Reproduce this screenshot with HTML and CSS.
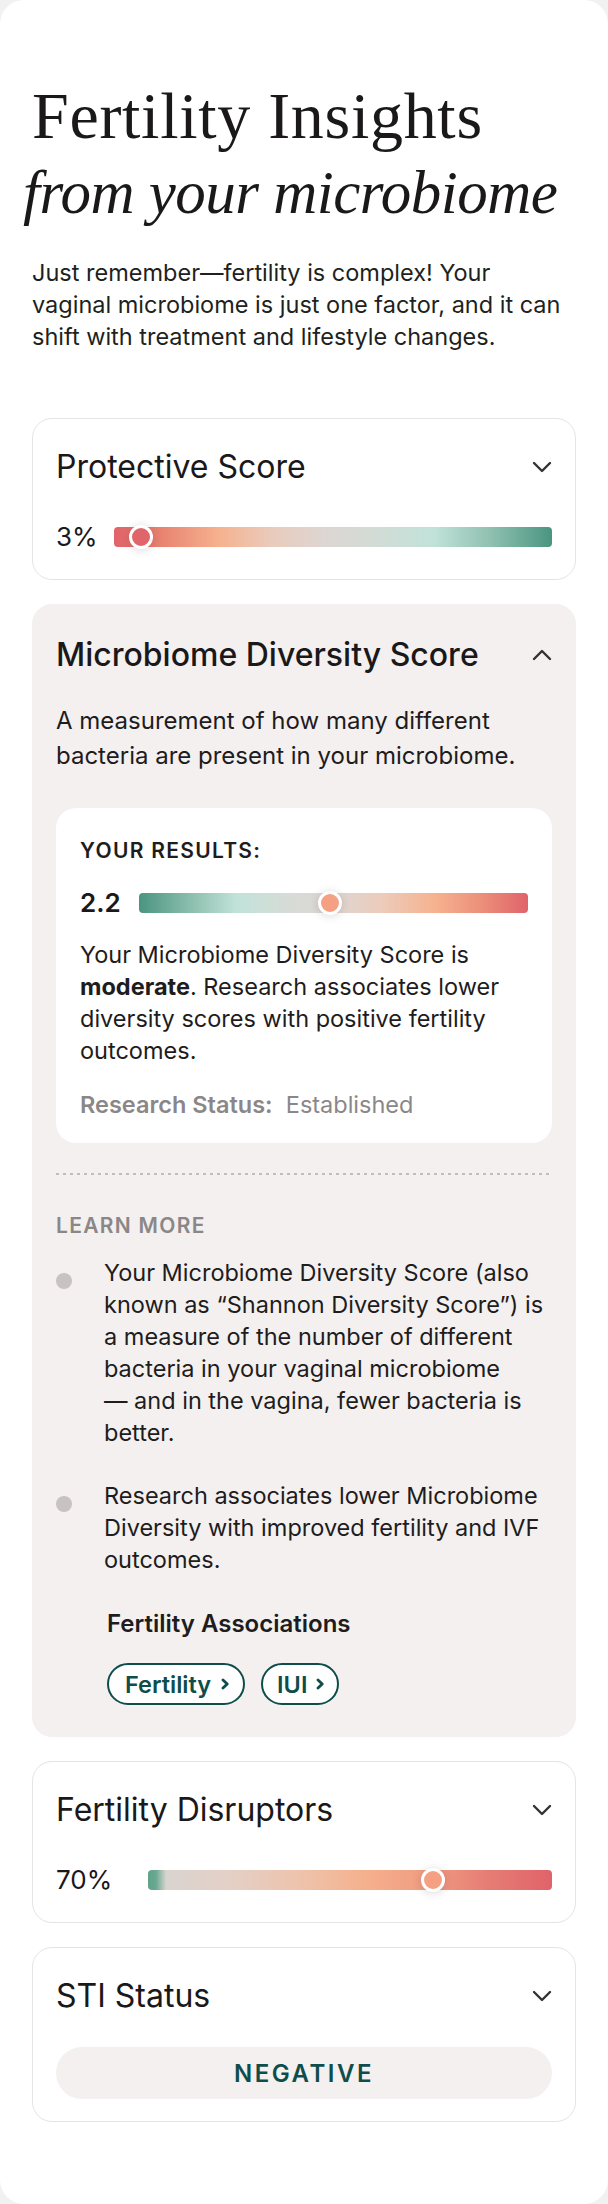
FILE: index.html
```html
<!DOCTYPE html>
<html lang="en">
<head>
<meta charset="utf-8">
<title>Fertility Insights</title>
<link rel="stylesheet" href="styles.css">
</head>
<body>
<main class="page">
  <h1 class="title">Fertility Insights<br><em>from your microbiome</em></h1>
  <p class="intro">Just remember—fertility is complex! Your vaginal microbiome is just one factor, and it can shift with treatment and lifestyle changes.</p>

  <section class="card">
    <div class="card-head">
      <h2 class="card-title">Protective Score</h2>
      <svg class="chev" viewBox="0 0 20 12" width="20" height="12"><path d="M2 2 L10 10 L18 2"/></svg>
    </div>
    <div class="meter">
      <span class="meter-value meter-value-narrow">3%</span>
      <div class="bar bar-protective">
        <span class="knob knob-red" style="left: 6.3%"></span>
      </div>
    </div>
  </section>

  <section class="card card-open">
    <div class="card-head">
      <h2 class="card-title card-title-strong">Microbiome Diversity Score</h2>
      <svg class="chev" viewBox="0 0 20 12" width="20" height="12"><path d="M2 10 L10 2 L18 10"/></svg>
    </div>
    <p class="desc">A measurement of how many different bacteria are present in your microbiome.</p>

    <div class="results">
      <div class="results-label">YOUR RESULTS:</div>
      <div class="meter meter-results">
        <span class="meter-value meter-value-bold">2.2</span>
        <div class="bar bar-diversity">
          <span class="knob knob-peach" style="left: 49.2%"></span>
        </div>
      </div>
      <p class="results-text">Your Microbiome Diversity Score is <strong>moderate</strong>. Research associates lower diversity scores with positive fertility outcomes.</p>
      <p class="status"><strong>Research Status:</strong>&nbsp; Established</p>
    </div>

    <div class="dots"></div>

    <div class="learn-label">LEARN MORE</div>
    <ul class="learn-list">
      <li>Your Microbiome Diversity Score (also known as “Shannon Diversity Score”) is a measure of the number of different bacteria in your vaginal microbiome —&nbsp;and in the vagina, fewer bacteria is better.</li>
      <li>Research associates lower Microbiome Diversity with improved fertility and IVF outcomes.</li>
    </ul>
    <div class="assoc">
      <div class="assoc-title">Fertility Associations</div>
      <div class="pills">
        <a class="pill">Fertility <svg class="pill-chev" viewBox="0 0 8 12" width="8" height="12"><path d="M2 2 L6.2 6 L2 10"/></svg></a>
        <a class="pill pill-short">IUI <svg class="pill-chev" viewBox="0 0 8 12" width="8" height="12"><path d="M2 2 L6.2 6 L2 10"/></svg></a>
      </div>
    </div>
  </section>

  <section class="card">
    <div class="card-head">
      <h2 class="card-title">Fertility Disruptors</h2>
      <svg class="chev" viewBox="0 0 20 12" width="20" height="12"><path d="M2 2 L10 10 L18 2"/></svg>
    </div>
    <div class="meter">
      <span class="meter-value meter-value-wide">70%</span>
      <div class="bar bar-disruptors">
        <span class="knob knob-peach" style="left: 70.5%"></span>
      </div>
    </div>
  </section>

  <section class="card card-sti">
    <div class="card-head">
      <h2 class="card-title">STI Status</h2>
      <svg class="chev" viewBox="0 0 20 12" width="20" height="12"><path d="M2 2 L10 10 L18 2"/></svg>
    </div>
    <div class="sti-pill">NEGATIVE</div>
  </section>
</main>
</body>
</html>
```

FILE: styles.css
```css
* { box-sizing: border-box; }

html, body {
  margin: 0;
  padding: 0;
  background: #f1f1f1;
}

body {
  font-family: Inter, "Noto Sans", "Liberation Sans", sans-serif;
  color: #1e1c1d;
}

.page {
  background: #ffffff;
  border-radius: 24px;
  min-height: 2204px;
  padding: 78px 32px 40px;
}

.title {
  margin: 0;
  font-family: "Liberation Serif", "DejaVu Serif", serif;
  font-weight: 400;
  font-size: 66px;
  line-height: 75px;
  letter-spacing: 0.7px;
  color: #1a1819;
  white-space: nowrap;
}

.title em {
  font-style: italic;
  font-size: 61px;
  letter-spacing: -0.5px;
  margin-left: -9px;
}

.intro {
  margin: 27px 0 65px;
  font-size: 23.5px;
  line-height: 32px;
  color: #211f20;
}

.card {
  border: 1px solid #e6e3e3;
  border-radius: 20px;
  padding: 28px 23px 28px;
  margin-bottom: 24px;
}

.card-open {
  background: #f3f0ef;
  border-color: #f3f0ef;
  padding-top: 30px;
  padding-bottom: 31px;
}

.card-head {
  display: flex;
  align-items: center;
  justify-content: space-between;
  height: 40px;
}

.card-title {
  margin: 0;
  font-size: 32px;
  line-height: 40px;
  font-weight: 400;
  color: #1a1819;
}

.card-title-strong {
  font-weight: 500;
}

.chev {
  flex: none;
  fill: none;
  stroke: #333132;
  stroke-width: 2.4;
  stroke-linecap: round;
  stroke-linejoin: round;
}

.meter {
  display: flex;
  align-items: center;
  height: 28px;
  margin-top: 36px;
}

.meter-value {
  font-size: 26px;
  line-height: 28px;
  color: #1a1819;
}

.meter-value-narrow { margin-right: 16px; }
.meter-value-wide { margin-right: 36px; }

.meter-value-bold {
  font-weight: 600;
  margin-right: 18px;
}

.bar {
  position: relative;
  flex: 1;
  height: 20px;
  border-radius: 4px;
}

.bar-protective {
  background: linear-gradient(90deg, #e0636a 0%, #e8806f 10%, #f6b28f 24%, #e9cbbc 36%, #ddd6d2 48%, #d2dcd6 60%, #c1e2d9 73%, #8fc0b0 86%, #4a9580 100%);
}

.bar-diversity {
  background: linear-gradient(90deg, #4a9580 0%, #8fc0b0 14%, #c1e2d9 25%, #d6dcd7 38%, #ddd6d2 50%, #ecccbc 62%, #f6b28f 76%, #ec8f7a 88%, #e0636a 100%);
}

.bar-disruptors {
  background: linear-gradient(90deg, #5fa38c 0%, #6aa892 2%, #d9d4cf 4.5%, #e4d0c7 20%, #efc1a8 40%, #f5b08d 54%, #f09b81 70%, #e67d75 84%, #e0636a 100%);
}

.knob {
  position: absolute;
  top: 50%;
  width: 24px;
  height: 24px;
  margin: -12px 0 0 -12px;
  border-radius: 50%;
  border: 3px solid #ffffff;
  box-shadow: 0 1px 8px rgba(60, 40, 40, 0.18);
}

.knob-red { background: #e0656b; }
.knob-peach { background: #f6a083; }

.desc {
  margin: 28px 0 35px;
  font-size: 24px;
  line-height: 35px;
  color: #1e1c1d;
}

.results {
  background: #ffffff;
  border-radius: 20px;
  padding: 30px 24px 22px;
}

.results-label {
  font-size: 21px;
  line-height: 26px;
  font-weight: 600;
  letter-spacing: 1.3px;
  color: #1e1c1d;
}

.meter-results {
  margin-top: 25px;
}

.results-text {
  margin: 22px 0 0;
  font-size: 23.5px;
  line-height: 32px;
  color: #1e1c1d;
}

.results-text strong { font-weight: 700; }

.status {
  margin: 22px 0 0;
  font-size: 23.5px;
  line-height: 32px;
  color: #8b8788;
}

.status strong { font-weight: 600; }

.dots {
  margin-top: 30px;
  height: 2px;
  background: repeating-linear-gradient(90deg, #c2bdbd 0 3px, transparent 3px 7px);
}

.learn-label {
  margin-top: 38px;
  font-size: 21px;
  line-height: 26px;
  font-weight: 600;
  letter-spacing: 1.3px;
  color: #8b8788;
}

.learn-list {
  list-style: none;
  margin: 18px -8px 0 0;
  padding: 0 0 0 48px;
}

.learn-list li {
  position: relative;
  font-size: 23.5px;
  line-height: 32px;
  color: #1e1c1d;
  margin-bottom: 31px;
}

.learn-list li:last-child { margin-bottom: 0; }

.learn-list li::before {
  content: "";
  position: absolute;
  left: -48px;
  top: 16px;
  width: 16px;
  height: 16px;
  border-radius: 50%;
  background: #c8c2c3;
}

.assoc {
  margin-left: 51px;
  margin-top: 33px;
}

.assoc-title {
  font-size: 24px;
  line-height: 30px;
  font-weight: 600;
  color: #1e1c1d;
}

.pills {
  display: flex;
  gap: 16px;
  margin-top: 24px;
}

.pill {
  display: inline-flex;
  align-items: center;
  gap: 10px;
  height: 42px;
  padding: 0 14px 0 16px;
  border: 2px solid #0e4d4a;
  border-radius: 21px;
  background: #ffffff;
  color: #0e4d4a;
  font-size: 23.5px;
  font-weight: 600;
}

.pill-short {
  padding: 0 13px 0 14px;
  gap: 9px;
}

.pill-chev {
  flex: none;
  fill: none;
  stroke: #0e4d4a;
  stroke-width: 2.8;
  stroke-linecap: round;
  stroke-linejoin: round;
}

.card-sti {
  padding-bottom: 22px;
}

.sti-pill {
  margin-top: 31px;
  height: 52px;
  border-radius: 26px;
  background: #f3f0ef;
  display: flex;
  align-items: center;
  justify-content: center;
  font-size: 24px;
  font-weight: 600;
  letter-spacing: 2.5px;
  color: #0e4d4a;
}
```
